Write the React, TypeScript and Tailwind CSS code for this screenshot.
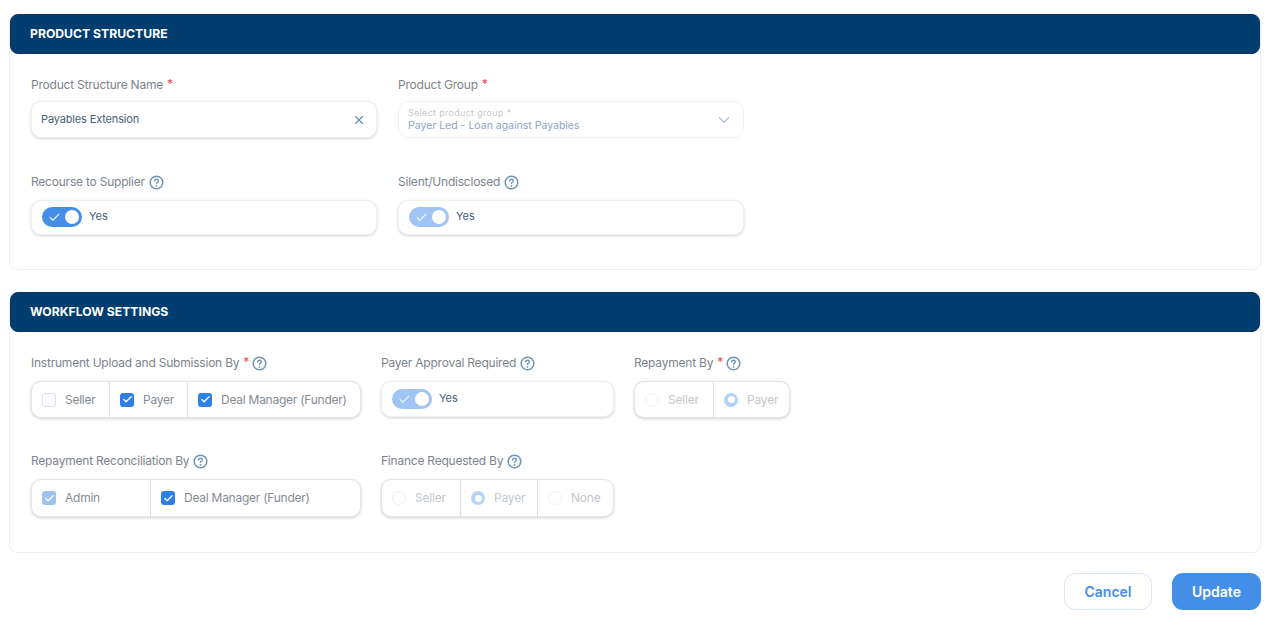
import React from "react";
import { X, ChevronDown, Check } from "lucide-react";

const font = "font-['Inter',sans-serif]";

const Help = () => (
  <svg width="15" height="15" viewBox="0 0 14 14" fill="none" className="shrink-0">
    <circle cx="7" cy="7" r="5.9" stroke="#6f93b5" strokeWidth="1.4" />
    <path d="M5.3 5.6c0-1 .8-1.6 1.7-1.6s1.7.6 1.7 1.5c0 1.3-1.7 1.3-1.7 2.4" stroke="#6f93b5" strokeWidth="1.3" strokeLinecap="round" />
    <circle cx="7" cy="10.2" r=".8" fill="#6f93b5" />
  </svg>
);

const Label = ({ text, req, help, mb = "mb-[9px]" }: { text: string; req?: boolean; help?: boolean; mb?: string }) => (
  <div className={`flex items-center h-[18px] text-[12px] leading-[18px] tracking-[-0.22px] text-[#7d838c] ${mb}`}>
    <span>{text}</span>
    {req && <span className="text-[#ef4444] ml-[4px] -mt-[3px]">*</span>}
    {help && <span className={req ? "ml-[3px]" : "ml-[4px]"}><Help /></span>}
  </div>
);

const Toggle = ({ muted }: { muted?: boolean }) => (
  <div className={`relative w-[40px] h-[20px] rounded-full shrink-0 ${muted ? "bg-[#a0c4f3]" : "bg-[#438fe7]"}`}>
    <Check size={13} strokeWidth={2.4} className="absolute left-[6px] top-[4px] text-[#e4effc]" />
    <div className="absolute right-[3px] top-[3px] w-[14px] h-[14px] rounded-full bg-white" />
  </div>
);

const ToggleBox = ({ muted, w, h }: { muted?: boolean; w: string; h: string }) => (
  <div className={`flex items-center gap-[7px] pl-[10px] pb-[1px] bg-white rounded-[10px] border border-[#eef0f3] shadow-[0_1px_3px_rgba(0,0,0,0.18)] ${w} ${h}`}>
    <Toggle muted={muted} />
    <span className="text-[11px] text-[#47607c] -mt-[1px]">Yes</span>
  </div>
);

const CheckBox = ({ state }: { state: "off" | "on" | "muted" }) => {
  if (state === "off") return <div className="w-[14px] h-[14px] rounded-[3px] border border-[#d8e2f5] bg-white shrink-0" />;
  return (
    <div className={`w-[14px] h-[14px] rounded-[3px] flex items-center justify-center shrink-0 ${state === "on" ? "bg-[#2f80e4]" : "bg-[#9dc2f2]"}`}>
      <Check size={11} strokeWidth={2.8} className="text-white" />
    </div>
  );
};

const Radio = ({ on }: { on?: boolean }) =>
  on ? (
    <div className="w-[14px] h-[14px] rounded-full bg-[#b4d2f7] flex items-center justify-center shrink-0">
      <div className="w-[7px] h-[7px] rounded-full bg-white" />
    </div>
  ) : (
    <div className="w-[14px] h-[14px] rounded-full border border-[#eef1f8] bg-white shrink-0" />
  );

const Group = ({ children, h, w }: { children: React.ReactNode; h: string; w: string }) => (
  <div className={`flex bg-white rounded-[10px] border border-[#e2e4e8] shadow-[0_1px_3px_rgba(0,0,0,0.18)] divide-x divide-[#dcdfe3] ${h} ${w}`}>
    {children}
  </div>
);

const CheckOpt = ({ label, state, w }: { label: string; state: "off" | "on" | "muted"; w: string }) => (
  <div className={`flex items-center gap-[9px] pl-[10px] text-[12px] tracking-[-0.25px] text-[#858b93] ${w}`}>
    <CheckBox state={state} />
    <span className="whitespace-nowrap">{label}</span>
  </div>
);

const RadioOpt = ({ label, on, w }: { label: string; on?: boolean; w: string }) => (
  <div className={`flex items-center gap-[9px] pl-[10px] text-[12px] tracking-[-0.2px] text-[#c3c7cc] ${w}`}>
    <Radio on={on} />
    <span>{label}</span>
  </div>
);

const Panel = ({ title, h, children }: { title: string; h: string; children: React.ReactNode }) => (
  <section className={`ml-[9px] mr-[19px] rounded-[8px] border border-[#eef0f2] bg-white ${h}`}>
    <div className="h-[40px] -mt-px rounded-[8px] bg-[#023d70] border border-[#14306a] flex items-center pl-[19px] text-[12.2px] font-bold text-white">
      {title}
    </div>
    {children}
  </section>
);

export default function App() {
  return (
    <div className={`${font} w-[1280px] h-[635px] bg-white pt-[14px] overflow-hidden`}>
      <Panel title="PRODUCT STRUCTURE" h="h-[256px]">
        <div className="pl-[21px] pt-[22px]">
          <div className="flex gap-[21px]">
            <div className="w-[346px]">
              <Label text="Product Structure Name" req mb="mb-[7px]" />
              <div className="flex items-center justify-between h-[37px] pl-[9px] pr-[10px] bg-white rounded-[10px] border border-[#eef0f3] shadow-[0_1px_3px_rgba(0,0,0,0.18)] text-[11px] tracking-[-0.15px] text-[#47607c]">
                <span>Payables Extension</span>
                <X size={14} strokeWidth={2} className="text-[#6f8ba6]" />
              </div>
            </div>
            <div className="w-[346px]">
              <Label text="Product Group" req mb="mb-[7px]" />
              <div className="flex items-center justify-between h-[37px] pl-[9px] pr-[10px] bg-white rounded-[10px] border border-[#f0f2f5]">
                <div className="flex flex-col">
                  <span className="text-[9px] leading-[12px] text-[#c6c9cd] tracking-[0.3px]">Select product group *</span>
                  <span className="text-[10.5px] leading-[13px] text-[#8fa6bf]">Payer Led - Loan against Payables</span>
                </div>
                <ChevronDown size={18} strokeWidth={1.5} className="text-[#a9bdd2]" />
              </div>
            </div>
          </div>
          <div className="flex gap-[21px] mt-[35px]">
            <div className="w-[346px]">
              <Label text="Recourse to Supplier" help />
              <ToggleBox w="w-full" h="h-[35px]" />
            </div>
            <div className="w-[346px]">
              <Label text="Silent/Undisclosed" help />
              <ToggleBox muted w="w-full" h="h-[35px]" />
            </div>
          </div>
        </div>
      </Panel>

      <div className="h-[22px]" />

      <Panel title="WORKFLOW SETTINGS" h="h-[261px]">
        <div className="pl-[21px] pt-[22px]">
          <div className="flex">
            <div className="w-[350px]">
              <Label text="Instrument Upload and Submission By" req help />
              <Group w="w-[330px]" h="h-[37px]">
                <CheckOpt label="Seller" state="off" w="w-[78px]" />
                <CheckOpt label="Payer" state="on" w="w-[78px]" />
                <CheckOpt label="Deal Manager (Funder)" state="on" w="flex-1" />
              </Group>
            </div>
            <div className="w-[253px]">
              <Label text="Payer Approval Required" help />
              <ToggleBox muted w="w-[233px]" h="h-[36px]" />
            </div>
            <div>
              <Label text="Repayment By" req help />
              <Group w="w-[156px]" h="h-[37px]">
                <RadioOpt label="Seller" w="w-[79px]" />
                <RadioOpt label="Payer" on w="flex-1" />
              </Group>
            </div>
          </div>
          <div className="flex mt-[34px]">
            <div className="w-[350px]">
              <Label text="Repayment Reconciliation By" help />
              <Group w="w-[330px]" h="h-[38px]">
                <CheckOpt label="Admin" state="muted" w="w-[119px]" />
                <CheckOpt label="Deal Manager (Funder)" state="on" w="flex-1" />
              </Group>
            </div>
            <div>
              <Label text="Finance Requested By" help />
              <Group w="w-[233px]" h="h-[38px]">
                <RadioOpt label="Seller" w="w-[79px]" />
                <RadioOpt label="Payer" on w="w-[77px]" />
                <RadioOpt label="None" w="flex-1" />
              </Group>
            </div>
          </div>
        </div>
      </Panel>

      <div className="flex justify-end gap-[20px] mt-[20px] pr-[19px]">
        <button className="w-[88px] h-[37px] rounded-[11px] border border-[#dbe5f8] bg-white text-[14px] font-semibold text-[#438fe7]">Cancel</button>
        <button className="w-[89px] h-[37px] rounded-[11px] bg-[#438fe7] text-[14px] font-semibold text-white">Update</button>
      </div>
    </div>
  );
}
